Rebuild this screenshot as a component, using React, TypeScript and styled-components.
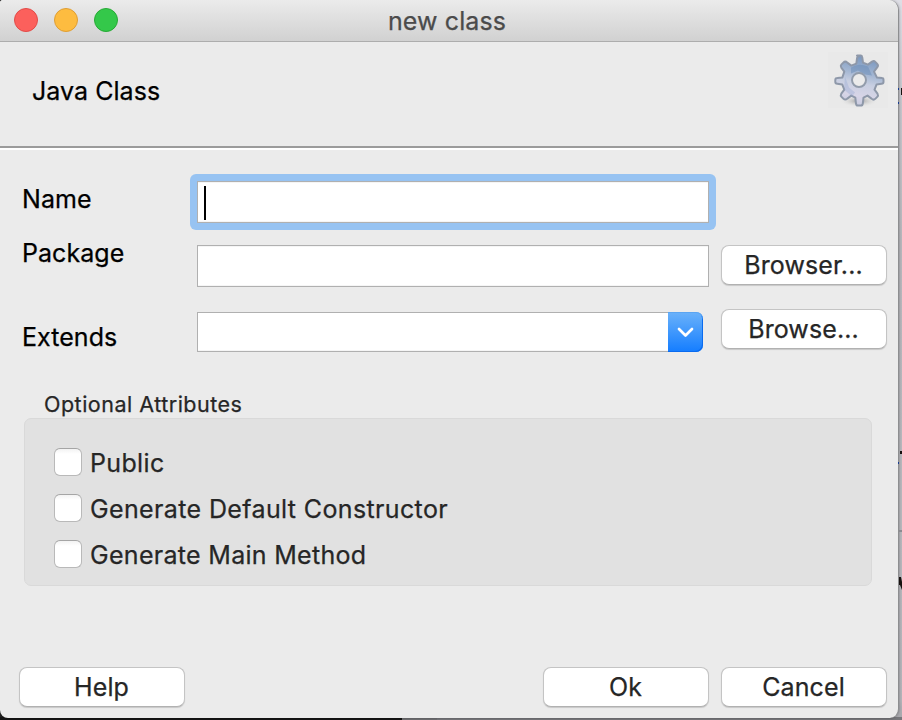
import React from "react";
import styled, { createGlobalStyle } from "styled-components";

const GlobalStyle = createGlobalStyle`
  *, *::before, *::after { box-sizing: border-box; }
  body {
    margin: 0;
    overflow: hidden;
    font-family: Inter, "Liberation Sans", sans-serif;
    -webkit-text-stroke: 0.25px currentColor;
  }
  button, input { font: inherit; }
`;

const Desktop = styled.main`
  position: relative;
  width: 902px;
  height: 720px;
  overflow: hidden;
  background:
    linear-gradient(90deg, #151515 0 402px, #707073 402px 437px, #77777b 437px 902px) 0 717px / 902px 3px no-repeat,
    linear-gradient(180deg, #dedee5 0, #c8c8ce 90px, #b8b8bd 240px, #b9b9be 520px, #b5b5ba 700px, #a5a5aa 720px) 880px 0 / 22px 720px no-repeat,
    #222;
`;

const EditorEdge = styled.svg`
  position: absolute;
  right: 0;
  top: 0;
`;

const Window = styled.section`
  display: flex;
  flex-direction: column;
  position: relative;
  width: 899px;
  height: 718px;
  overflow: hidden;
  background: #ebebeb;
  border-right: 1px solid #8d8e90;
  border-radius: 3px 10px 9px 8px;
  box-shadow: 0 0 3px rgba(0, 0, 0, 0.35);
`;

const TitleBar = styled.header`
  display: grid;
  grid-template-columns: 120px 1fr 124px;
  align-items: start;
  flex: none;
  height: 42px;
  border-bottom: 1px solid #adadad;
  background: linear-gradient(#ebebeb, #d1d1d1);
`;

const Lights = styled.div`
  display: flex;
  gap: 16px;
  padding: 8px 0 0 14px;
`;

const Light = styled.span<{ $fill: string; $edge: string }>`
  width: 24px;
  height: 24px;
  border-radius: 50%;
  border: 1px solid ${(p) => p.$edge};
  background: ${(p) => p.$fill};
`;

const Title = styled.h1<{ $spacing: number }>`
  margin: 0;
  font-size: 25px;
  font-weight: 400;
  line-height: 42px;
  letter-spacing: ${(p) => p.$spacing}px;
  text-align: center;
  color: #4b4b4b;
`;

const Banner = styled.div`
  display: flex;
  justify-content: space-between;
  flex: none;
  height: 108px;
  padding: 10px 10px 0 32px;
  border-bottom: 2px solid #fff;
  box-shadow: inset 0 -2px #9b9b9b;
`;

const Heading = styled.h2`
  margin: 0;
  padding-top: 19px;
  font-size: 25px;
  font-weight: 400;
  line-height: 40px;
  letter-spacing: 0.05px;
  color: #000;
`;

const Gear = styled.svg`
  width: 60px;
  height: 56px;
  background: #e9e9e9;
`;

const Form = styled.div`
  display: grid;
  grid-template-columns: 168px 524px 1fr;
  grid-template-rows: 71px 64px 80px;
  flex: none;
  padding: 24px 11px 0 22px;
`;

const Label = styled.label<{ $top: number }>`
  margin-top: ${(p) => p.$top}px;
  font-size: 25px;
  line-height: 30px;
  letter-spacing: 0.05px;
  color: #000;
`;

const FocusRing = styled.div`
  display: flex;
  align-items: center;
  width: 526px;
  height: 56px;
  padding: 7px;
  border-radius: 6px;
  background: #97c3f2;
`;

const Field = styled.div`
  width: 512px;
  height: 42px;
  border: 1px solid #b0b0b0;
  background: #fff;
  box-shadow: inset 0 1px #f5f5f5, inset 0 -1px #f5f5f5;
`;

const Caret = styled.span`
  display: block;
  width: 2px;
  height: 34px;
  margin: 4px 0 0 6px;
  background: #000;
`;

const FieldSlot = styled.div<{ $top?: number }>`
  padding: ${(p) => p.$top ?? 0}px 0 0 7px;
`;

const Combo = styled.div`
  display: flex;
  width: 506px;
  height: 40px;
`;

const ComboValue = styled.div`
  flex: 1;
  border: 1px solid #b0b0b0;
  border-right: 0;
  background: #fff;
  box-shadow: inset 0 -1px #f5f5f5;
`;

const ComboButton = styled.button`
  display: grid;
  place-items: center;
  width: 35px;
  padding: 0;
  border: 0;
  border-radius: 0 7px 7px 0;
  background: linear-gradient(#6bb2fa, #147dff);
  box-shadow: inset 0 1px #5ba5f2, inset -1px -1px #0a6bef;
`;

const PushButton = styled.button`
  width: 166px;
  height: 40px;
  padding: 0 1px 0 0;
  border: 1px solid #c4c4c4;
  border-bottom-color: #b1b1b1;
  border-radius: 8px;
  background: #fff;
  box-shadow: 0 1px 1px rgba(0, 0, 0, 0.15);
  font-size: 25px;
  line-height: 36px;
  letter-spacing: 0.1px;
  color: #262626;
`;

const Options = styled.section`
  flex: none;
  padding-left: 24px;
`;

const OptionsTitle = styled.h3`
  margin: 0;
  padding-left: 20px;
  height: 29px;
  font-size: 21.5px;
  font-weight: 400;
  line-height: 30px;
  letter-spacing: 0.5px;
  color: #262626;
`;

const OptionsBox = styled.div`
  display: flex;
  flex-direction: column;
  gap: 16px;
  width: 848px;
  height: 168px;
  padding: 29px;
  border: 1px solid #d9d9d9;
  border-radius: 7px;
  background: #e1e1e1;
`;

const Option = styled.label<{ $spacing: number }>`
  display: flex;
  align-items: center;
  gap: 8px;
  height: 30px;
  font-size: 25px;
  line-height: 30px;
  letter-spacing: ${(p) => p.$spacing}px;
  color: #262626;
  white-space: nowrap;
`;

const CheckBox = styled.span`
  width: 28px;
  height: 28px;
  margin-bottom: 2px;
  border: 1px solid #b9b9b9;
  border-top-color: #a5a5a5;
  border-radius: 6px;
  background: linear-gradient(#f3f3f3, #fff 5px);
`;

const Footer = styled.footer`
  display: flex;
  gap: 12px;
  margin-top: auto;
  padding: 0 11px 11px 19px;
  & > :first-child { margin-right: auto; }
`;

const options = [
  { text: "Public", spacing: 0.35 },
  { text: "Generate Default Constructor", spacing: 0.37 },
  { text: "Generate Main Method", spacing: 0.3 },
];

function GearIcon() {
  return (
    <Gear viewBox="0 0 60 56" aria-hidden="true">
      <defs>
        <linearGradient id="metal" x1="0.6" y1="0" x2="0.4" y2="1">
          <stop offset="0" stopColor="#7695be" />
          <stop offset="0.35" stopColor="#a3b6d2" />
          <stop offset="0.55" stopColor="#c8cfe1" />
          <stop offset="0.8" stopColor="#d7d5e7" />
          <stop offset="1" stopColor="#c7cadf" />
        </linearGradient>
        <radialGradient id="shade">
          <stop offset="0" stopColor="#969696" />
          <stop offset="1" stopColor="#e9e9e9" stopOpacity="0" />
        </radialGradient>
      </defs>
      <ellipse cx="31" cy="49" rx="19" ry="6" fill="url(#shade)" />
      <g transform="translate(0 0.6)">
        <path
          d="M29 3h4q1 0 1.300 2l.7 5 5 2 4-3q2-1 3 0l2 2q2 2 0 4l-3 4 3 6 5 .5q1.500 0 1.500 2v2q0 1.500-2 1.700l-5 .8-2 5 3 4q1 2 0 3l-2 2q-2 2-4 0l-4-3-4 2-.7 6q-.3 2-2 2h-3q-1.500 0-1.800-2l-.7-6-4-2-4 3q-2 2-4 0l-2-2q-1-1 0-3l3-4-2-5-5-.8q-2-.2-2-1.700v-2q0-2 2-2l5-.5 2-6-3-4q-1-2 0-3l2-2q2-2 4 0l4 3 5-2 .7-5q.3-2 1.700-2z"
          fill="url(#metal)" stroke="#8e98a9" strokeWidth="2" strokeLinejoin="round"
        />
        <path d="M23 15q7-5 17-1l4 9-7-1-7-4-7 3z" fill="#6487b4" opacity=".45" />
        <path d="M17 24l4 11 6 5-3 4-8-7z" fill="#93a7d0" opacity=".35" />
        <circle cx="31" cy="27.500" r="7" fill="#ebebeb" stroke="#929cab" strokeWidth="2" />
      </g>
    </Gear>
  );
}

export default function App() {
  return (
    <>
      <GlobalStyle />
      <Desktop>
        <Window>
          <TitleBar>
            <Lights>
              <Light $fill="#fc605c" $edge="#e24b48" />
              <Light $fill="#fdbc40" $edge="#df9e34" />
              <Light $fill="#34c84a" $edge="#27aa35" />
            </Lights>
            <Title $spacing={0.1}>new class</Title>
          </TitleBar>
          <Banner>
            <Heading>Java Class</Heading>
            <GearIcon />
          </Banner>
          <Form>
            <Label $top={10}>Name</Label>
            <FocusRing>
              <Field><Caret /></Field>
            </FocusRing>
            <span />
            <Label $top={-7}>Package</Label>
            <FieldSlot><Field /></FieldSlot>
            <FieldSlot>
              <PushButton>Browser...</PushButton>
            </FieldSlot>
            <Label $top={13}>Extends</Label>
            <FieldSlot $top={3}>
              <Combo>
                <ComboValue />
                <ComboButton aria-label="Show choices">
                  <svg width="17" height="11" viewBox="0 0 17 11" fill="none">
                    <path d="M2 2l6.500 6.500L15 2" stroke="#fff" strokeWidth="2.7" strokeLinecap="round" strokeLinejoin="round" />
                  </svg>
                </ComboButton>
              </Combo>
            </FieldSlot>
            <FieldSlot>
              <PushButton>Browse...</PushButton>
            </FieldSlot>
          </Form>
          <Options>
            <OptionsTitle>Optional Attributes</OptionsTitle>
            <OptionsBox>
              {options.map((o) => (
                <Option key={o.text} $spacing={o.spacing}>
                  <CheckBox />
                  {o.text}
                </Option>
              ))}
            </OptionsBox>
          </Options>
          <Footer>
            <PushButton>Help</PushButton>
            <PushButton>Ok</PushButton>
            <PushButton>Cancel</PushButton>
          </Footer>
        </Window>
        <EditorEdge width="4" height="720" viewBox="0 0 4 720" aria-hidden="true">
          <path d="M0 88h1v2H0zM0 102h1v2H0zM0 462h1v2H0z" fill="#173b91" />
          <path d="M3 88h1v7H3zM2 451h2v3H2zM1 577h2l1 5v8L2 585H1z" fill="#17110f" />
          <path d="M1 530h3v2H1z" fill="#8b8b91" />
        </EditorEdge>
      </Desktop>
    </>
  );
}
